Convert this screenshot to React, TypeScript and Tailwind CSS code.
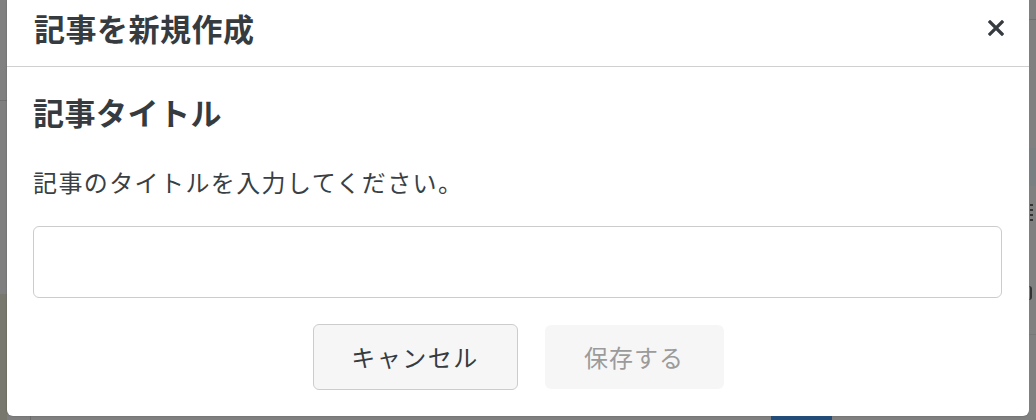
import React from "react";

const font = { fontFamily: '"Noto Sans CJK JP", "Noto Sans", sans-serif' };

function LeftStrip() {
  return (
    <div className="w-[7px] flex flex-col">
      <div className="h-[100px] bg-[#808080]" />
      <div className="h-px bg-[#6f6f6f]" />
      <div className="h-[193px] bg-[#7f7f7f]" />
      <div className="flex-1 bg-[#78786f]" />
    </div>
  );
}

function RightStrip() {
  return (
    <div className="w-[7px] flex flex-col bg-[#808080]">
      <div className="h-[19px]" />
      <div className="h-px bg-[#707070]" />
      <div className="h-[128px]" />
      <div className="h-[38px] bg-[#7a7f82]" />
      <div className="h-[18px]" />
      {/* fragment of a character cut by the edge */}
      <div className="h-[18px] flex flex-col gap-[3px] pl-[1px]">
        <div className="w-[3px] h-[2px] bg-[#333]" />
        <div className="w-[3px] h-[2px] bg-[#333]" />
        <div className="w-[3px] h-[2px] bg-[#333]" />
        <div className="w-[3px] h-[2px] bg-[#333]" />
      </div>
      <div className="h-[64px]" />
      <div className="h-[14px] w-[3px] rounded-r-full border-r-2 border-[#333]" />
      <div className="h-[34px]" />
      <div className="h-px bg-[#777]" />
      <div className="flex-1" />
    </div>
  );
}

export default function App() {
  return (
    <div className="w-[1036px] h-[420px] overflow-hidden bg-[#808080] flex" style={font}>
      <LeftStrip />
      <div className="w-[1022px] flex flex-col">
        <div className="h-[416px] bg-white rounded-b-[6px] shadow-[0_0_2px_rgba(0,0,0,0.25)] flex flex-col">
          <div className="h-[67px] border-b border-[#d0d0d0] flex items-center justify-between pl-[27px] pr-[25px] pb-[10px]">
            <h1 className="text-[31px] font-bold text-[#363b40] tracking-[0.5px]">記事を新規作成</h1>
            <svg width="16" height="16" viewBox="0 0 16 16">
              <path d="M2 2 L14 14 M14 2 L2 14" stroke="#363b40" strokeWidth="3.2" strokeLinecap="square" />
            </svg>
          </div>
          <div className="flex flex-col px-[26px]">
            <h2 className="mt-[25px] text-[31px] leading-[40px] font-bold text-[#363b40] tracking-[0.5px]">記事タイトル</h2>
            <p className="mt-[32px] text-[24px] leading-[36px] text-[#3a3f44] tracking-[1.4px]">記事のタイトルを入力してください。</p>
            <input
              className="mt-[26px] w-[969px] h-[72px] border border-[#cccccc] rounded-[6px] outline-none px-3 text-[22px]"
              type="text"
            />
            <div className="mt-[26px] flex justify-center gap-[27px]">
              <button className="w-[205px] h-[66px] bg-[#f6f6f6] border border-[#cccccc] rounded-[6px] text-[24px] text-[#363b40] tracking-[1.5px]">
                キャンセル
              </button>
              <button className="mt-[1px] w-[179px] h-[64px] bg-[#f6f6f6] rounded-[6px] text-[24px] text-[#9b9b9b] tracking-[1px]">
                保存する
              </button>
            </div>
          </div>
        </div>
        <div className="flex-1 flex">
          <div className="w-[23px]" />
          <div className="w-px bg-[#6a6a6a]" />
          <div className="w-[740px]" />
          <div className="w-[61px] bg-[#234d78]" />
        </div>
      </div>
      <RightStrip />
    </div>
  );
}
